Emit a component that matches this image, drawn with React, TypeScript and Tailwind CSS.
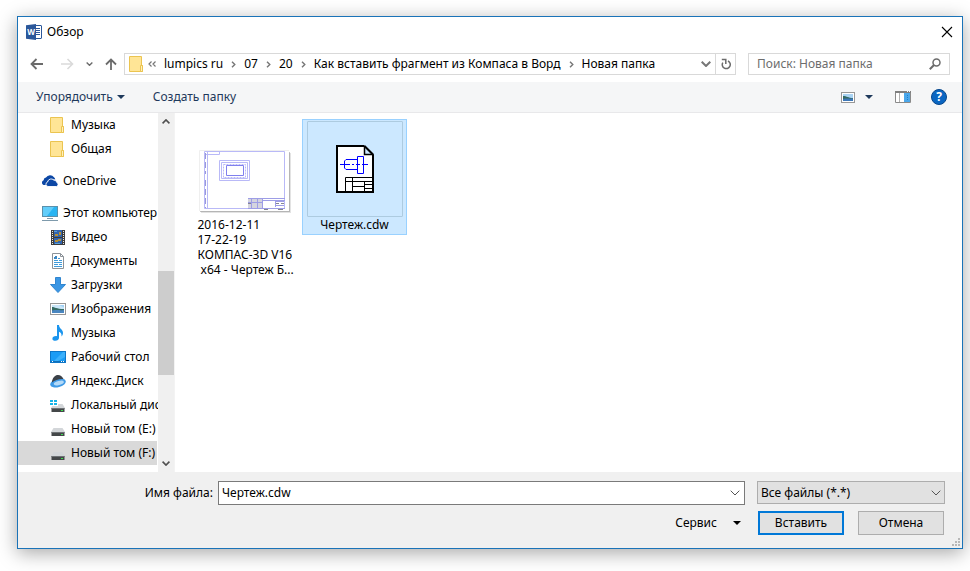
import React, { useState } from 'react';
import clsx from 'clsx';

interface TreeItem {
    id: string;
    label: string;
    icon: React.ReactNode;
    level: 1 | 2;
    spaced?: boolean;
}

const FolderIcon = () => (
    <svg className="h-4 w-[14px] shrink-0" viewBox="0 0 14 16">
        <path d="M.5.5h12v9h1v6H.5z" fill="#ffe393" stroke="#ebc450" />
        <path d="M1 1h11v14H1z" fill="#ffe596" />
        <path d="M11.500 15V9.500h2v6h-2z" fill="#fff0bd" stroke="#ebc450" />
    </svg>
);

const WordIcon = () => (
    <svg className="h-4 w-4 shrink-0" viewBox="0 0 16 16">
        <rect x="8.500" y="1.500" width="7" height="13" rx=".5" fill="#fff" stroke="#2b579a" />
        <path d="M10 4.500h4M10 6.500h4M10 8.500h4M10 10.500h4" stroke="#2b579a" />
        <path d="M0 1.200 10 0v16L0 14.800z" fill="#2b579a" />
        <text x="5" y="11" textAnchor="middle" fontSize="8" fontWeight="700" fontFamily="Noto Sans, sans-serif" fill="#fff">W</text>
    </svg>
);

const OneDriveIcon = () => (
    <svg className="h-4 w-4 shrink-0" viewBox="0 0 16 16">
        <path d="M1.500 12A2.600 2.600 0 0 1 1.600 7.200 3 3 0 0 1 4 4.600a4.800 4.800 0 0 1 8-.4 4 4 0 0 1 1.300 2.400L9 6 5 9l-.5 3z" fill="#0c47a5" />
        <path d="M6 13.500a2.300 2.300 0 0 1-.4-4.500 3.600 3.600 0 0 1 6.200-1.900 2.900 2.900 0 0 1 3 2.400 2.100 2.100 0 0 1-.4 4z" fill="#0c47a5" stroke="#fff" strokeWidth=".9" />
    </svg>
);

const ComputerIcon = () => (
    <svg className="h-4 w-4 shrink-0" viewBox="0 0 16 16">
        <rect x=".5" y="1.500" width="15" height="10" fill="#29b4f2" stroke="#5b90ab" />
        <path d="M1 2h11L5 11H1z" fill="#62cdfa" />
        <path d="M5 13.500h6M0 15.500h16" stroke="#7e9aac" />
    </svg>
);

const VideoIcon = () => (
    <svg className="h-4 w-4 shrink-0" viewBox="0 0 16 16">
        <path d="M1 1h14v15H1z" fill="#3c3c3c" />
        <path d="M2.500 2v13M13.500 2v13" stroke="#e8e8e8" strokeDasharray="1 1" />
        <path d="M4 1h8v7H4zM4 9h8v6H4z" fill="#3264ae" />
        <path d="M5 7V5h3v2zM9 3h2v3H9zM5 11h3v2H5zM8 10h3v2H8z" fill="#b69037" />
        <path d="M4 2h3v1H4zM5 14h5v1H5z" fill="#57a0dc" />
    </svg>
);

const DocumentIcon = () => (
    <svg className="h-4 w-4 shrink-0" viewBox="0 0 16 16">
        <path d="M2.500.5h8l3 3v12h-11z" fill="#fff" stroke="#8c9298" />
        <path d="M10.500.5v3h3" fill="none" stroke="#8c9298" />
        <path d="M8 5.500h2M9 7.500h3M4 9.500h8M4 11.500h4M9 11.500h3M4 13.500h8M4 7.500h4" stroke="#3f9bdb" />
        <path d="M4 4h3v2H4zM5 3h2v2H5z" fill="#3a87c4" />
    </svg>
);

const DownloadIcon = () => (
    <svg className="h-4 w-4 shrink-0" viewBox="0 0 16 16">
        <path d="M5.500.5h5v7h5L8 15.500.5 7.500h5z" fill="#3a96e4" stroke="#3185cf" />
    </svg>
);

const PictureIcon = () => (
    <svg className="h-4 w-4 shrink-0" viewBox="0 0 16 16">
        <rect x=".5" y="2.500" width="15" height="11" fill="#fff" stroke="#979797" />
        <path d="M2 4h12v8H2z" fill="#9fd0f4" />
        <path d="M2 4h7l5 2.500V8H2z" fill="#c9e5f8" />
        <path d="M2 6c3 0 4 2 12 2v2H2z" fill="#356b63" />
        <path d="M2 9.500c5-.8 8 0 12-.5v3H2z" fill="#4a86c0" />
    </svg>
);

const MusicIcon = () => (
    <svg className="h-4 w-4 shrink-0" viewBox="0 0 16 16">
        <path d="M7 0h2c0 3.500 4 4.500 4 8 0 1.500-.6 2.600-1.500 3.500.3-2.500-.5-4-2.500-4.700V13c0 1.600-1.600 2.800-3.600 2.800-1.800 0-3-.8-3-2.100 0-1.700 2-2.900 4.600-2.500z" fill="#1b95ee" />
    </svg>
);

const DesktopIcon = () => (
    <svg className="h-4 w-4 shrink-0" viewBox="0 0 16 16">
        <rect x=".5" y="2.500" width="15" height="11" fill="#1b9cf5" stroke="#0d76c8" />
        <path d="M13 3h2v5L8 12H4z" fill="#3bb0fb" />
        <path d="M1 12.500h14" stroke="#0f6fb8" />
        <path d="M2 12.500h1M11 12.500h1M13 12.500h1" stroke="#fff" />
    </svg>
);

const YandexDiskIcon = () => (
    <svg className="h-4 w-4 shrink-0" viewBox="0 0 16 16">
        <ellipse cx="8" cy="10" rx="8" ry="4.200" transform="rotate(-15 8 10)" fill="#3f9ae6" />
        <ellipse cx="8.800" cy="10" rx="5.200" ry="2" transform="rotate(-15 8.800 10)" fill="#b4daf8" />
        <path d="M2 8C3 4.500 5 2 8 2c2.500 0 4 1.500 5.500 4C9.500 5.500 5 7 2 9.500z" fill="#3c4148" />
    </svg>
);

const DriveIcon = ({ system = false }: { system?: boolean }) => (
    <svg className="h-4 w-4 shrink-0" viewBox="0 0 16 16">
        <path d="M3.500 7h9l2.500 4H1z" fill="#d3d6d9" />
        <path d="M1.500 11h13v4h-13z" fill="#444749" />
        <path d="M1.500 11.500h13" stroke="#6d7174" />
        <path d="M11 13.500h2" stroke="#3de04d" />
        {system && (
            <>
                <path d="M0 2h8v7H0z" fill="#fff" />
                <path d="M0 3h3v2H0zM4 3h3v2H4zM0 6h3v2H0zM4 6h3v2H4z" fill="#16b4e8" />
            </>
        )}
    </svg>
);

const Chevron = ({ className }: { className?: string }) => (
    <svg className={clsx('shrink-0', className)} viewBox="0 0 10 6" fill="none" stroke="currentColor">
        <path d="m.7.7 4.300 4.300L9.300.7" />
    </svg>
);

const CrumbArrow = () => (
    <svg className="h-[7px] w-[5px] shrink-0" viewBox="0 0 5 7" fill="none" stroke="#767676" strokeWidth="1.400">
        <path d="m1 .7 2.800 2.800L1 6.300" />
    </svg>
);

const Caret = () => (
    <svg className="h-1 w-2 shrink-0" viewBox="0 0 8 4" fill="currentColor">
        <path d="M0 0h8L4 4z" />
    </svg>
);

const DrawingThumbnail = () => (
    <svg className="h-[68px] w-[96px]" viewBox="0 0 96 68">
        <path d="M4 6h90v60H4z" fill="#8f8f8f" opacity=".25" />
        <path d="M3 5h90v60H3z" fill="#909090" opacity=".55" />
        <path d="M2 3h90v61H2z" fill="#fff" />
        <path d="M2.500 64V3.500H92" fill="none" stroke="#efefef" />
        <g fill="none" stroke="#b9b9f7">
            <path d="M7.500 4.500h80v57h-80zM10.500 4.500v57M7.500 7.500h15v-3" />
            <path d="M8.500 6v21M8.500 33v28" stroke="#9a9adb" strokeDasharray="6 3" />
            <path d="M22.500 13.500h30v20h-30zM24.500 15.500h26v16h-26z" />
            <path d="M26.500 17.500h22v13h-22z" strokeDasharray="2 1" />
            <path d="M29.500 18.500h17v10h-17z" stroke="#8080ee" />
        </g>
        <path d="M51 52h14v10H51z" fill="#d4d4df" />
        <path d="M51 51.500h37M51 55.500h14M54.500 52v10M60.500 52v10M65.500 52v10M78.500 54v6M66 53.500h22M78 54.500h9M78 58.500h9M51 61.500h37" stroke="#9d9de6" fill="none" />
        <path d="M67 62.500h4M81 62.500h5M79 56.500h3M84 56.500h3M51 56.500h3" stroke="#85858f" />
    </svg>
);

const CdwIcon = () => (
    <svg className="h-12 w-[38px]" viewBox="0 0 38 48">
        <path d="M1 1h27.500L37 9.500V47H1z" fill="#fff" stroke="#000" strokeWidth="2" />
        <path d="M28.500 1v8.500H37z" fill="#cce8ff" stroke="#000" strokeWidth="1.500" />
        <path d="M28 0h10v9.500z" fill="#cce8ff" />
        <path d="m28.500 1 8.500 8.500" stroke="#000" strokeWidth="2" />
        <path d="M4 19.500h10M16 19.500h2M20 19.500h4M26 19.500h6" stroke="#00f" />
        <path d="M21.500 14.500H10L8.500 16v7l1.500 1.500h11.500M21.500 11.500h6v17h-6z" fill="none" stroke="#00f" />
        <path d="M9.500 47V32.500H37M9.500 36.500H37M16.500 32v15M16.500 41.500h12M28.500 37v10M29 39.500h8M29 43.500h8" fill="none" stroke="#000" />
    </svg>
);

const tree: TreeItem[] = [
    { id: 'music-folder', label: 'Музыка', icon: <FolderIcon />, level: 2 },
    { id: 'shared', label: 'Общая', icon: <FolderIcon />, level: 2 },
    { id: 'onedrive', label: 'OneDrive', icon: <OneDriveIcon />, level: 1, spaced: true },
    { id: 'computer', label: 'Этот компьютер', icon: <ComputerIcon />, level: 1, spaced: true },
    { id: 'video', label: 'Видео', icon: <VideoIcon />, level: 2 },
    { id: 'documents', label: 'Документы', icon: <DocumentIcon />, level: 2 },
    { id: 'downloads', label: 'Загрузки', icon: <DownloadIcon />, level: 2 },
    { id: 'pictures', label: 'Изображения', icon: <PictureIcon />, level: 2 },
    { id: 'music', label: 'Музыка', icon: <MusicIcon />, level: 2 },
    { id: 'desktop', label: 'Рабочий стол', icon: <DesktopIcon />, level: 2 },
    { id: 'yandex', label: 'Яндекс.Диск', icon: <YandexDiskIcon />, level: 2 },
    { id: 'local', label: 'Локальный дис', icon: <DriveIcon system />, level: 2 },
    { id: 'drive-e', label: 'Новый том (E:)', icon: <DriveIcon />, level: 2 },
    { id: 'drive-f', label: 'Новый том (F:)', icon: <DriveIcon />, level: 2 },
];

const crumbs = ['lumpics ru', '07', '20', 'Как вставить фрагмент из Компаса в Ворд', 'Новая папка'];

function TitleBar() {
    return (
        <header className="flex h-[29px] items-center justify-between pl-2 pr-[9px]">
            <div className="flex items-center gap-[5px]">
                <WordIcon />
                <h1>Обзор</h1>
            </div>
            <button aria-label="Закрыть">
                <svg className="h-3 w-3" viewBox="0 0 12 12" stroke="#000" strokeWidth="1.100">
                    <path d="m1 1 10 10M11 1 1 11" />
                </svg>
            </button>
        </header>
    );
}

function AddressBar() {
    return (
        <nav className="flex h-9 items-center px-3">
            <div className="flex items-center text-[#6b6b6b]">
                <button aria-label="Назад">
                    <svg className="h-3 w-[14px]" viewBox="0 0 14 12" fill="none" stroke="currentColor" strokeWidth="1.800">
                        <path d="M13 6H1.500M6.500 1l-5 5 5 5" />
                    </svg>
                </button>
                <button aria-label="Вперед" className="ml-4 text-[#dadada]">
                    <svg className="h-3 w-[14px]" viewBox="0 0 14 12" fill="none" stroke="currentColor" strokeWidth="1.600">
                        <path d="M1 6h11.500M7.500 1l5 5-5 5" />
                    </svg>
                </button>
                <button aria-label="Последние расположения" className="ml-3 stroke-2">
                    <Chevron className="h-1 w-[7px]" />
                </button>
                <button aria-label="Вверх" className="ml-3">
                    <svg className="h-3 w-3" viewBox="0 0 12 12" fill="none" stroke="currentColor" strokeWidth="1.800">
                        <path d="M6 12V1.500M1 6.500l5-5 5 5" />
                    </svg>
                </button>
            </div>
            <div className="ml-[7px] flex h-[22px] min-w-0 flex-1 items-center border border-[#d9d9d9] pl-1">
                <FolderIcon />
                <button aria-label="Предыдущие папки" className="ml-[5px]">
                    <svg className="h-[6px] w-2" viewBox="0 0 8 6" fill="none" stroke="#767676" strokeWidth="1.200">
                        <path d="M3.500.5 1 3l2.500 2.500M7.500.5 5 3l2.500 2.500" />
                    </svg>
                </button>
                <ol className="ml-2 flex min-w-0 flex-1 items-center gap-2 whitespace-nowrap">
                    {crumbs.map((crumb, i) => (
                        <li key={crumb} className="flex items-center gap-2">
                            {i > 0 && <CrumbArrow />}
                            <button>{crumb}</button>
                        </li>
                    ))}
                </ol>
                <button aria-label="Предыдущие расположения" className="mr-1 stroke-2 text-[#767676]">
                    <Chevron className="h-[6px] w-[10px]" />
                </button>
                <button aria-label="Обновить" className="flex h-full w-5 items-center justify-center border-l border-[#d9d9d9]">
                    <svg className="h-3 w-[10px]" viewBox="0 0 10 12" fill="none" stroke="#6b6b6b" strokeWidth="1.500">
                        <path d="M7 3A4 4 0 1 1 1.800 4.600M.8 1.500h4V6" />
                    </svg>
                </button>
            </div>
            <label className="ml-3 flex h-[22px] w-[202px] items-center border border-[#d9d9d9] px-2">
                <input aria-label="Поиск" placeholder="Поиск: Новая папка" className="min-w-0 flex-1 outline-none placeholder:text-[#6d6d6d]" />
                <svg className="h-3 w-3 shrink-0" viewBox="0 0 12 12" fill="none" stroke="#6b6b6b" strokeWidth="1.500">
                    <circle cx="7.500" cy="4.500" r="3.500" />
                    <path d="M5 7 .8 11.200" strokeWidth="2" />
                </svg>
            </label>
        </nav>
    );
}

function Toolbar() {
    return (
        <div className="flex h-[31px] items-center justify-between border-b border-[#e8e8ea] bg-[#f5f6f7] pl-[18px] pr-[15px] text-[#1e395b]">
            <div className="flex items-center gap-7">
                <button className="flex items-center gap-1">Упорядочить <Caret /></button>
                <button>Создать папку</button>
            </div>
            <div className="flex items-center">
                <button aria-label="Изменить представление">
                    <svg className="h-[11px] w-[14px]" viewBox="0 0 14 11">
                        <rect x=".5" y=".5" width="13" height="10" fill="#fff" stroke="#979797" />
                        <path d="M2 2h10v7H2z" fill="#a9d3f3" />
                        <path d="M2 4c4 0 5 2 10 2v1H2z" fill="#356b63" />
                        <path d="M2 7c4-1 6 0 10-.5V9H2z" fill="#3c77b8" />
                    </svg>
                </button>
                <button aria-label="Дополнительные параметры" className="ml-[10px]"><Caret /></button>
                <button aria-label="Область просмотра" className="ml-[22px]">
                    <svg className="h-3 w-4" viewBox="0 0 16 12">
                        <path d="M.5.5h15v11H.5z" fill="#fff" stroke="#8a8a8a" />
                        <path d="M0 0h16v2H0z" fill="#7f7f7f" />
                        <path d="M4.500 2v9" stroke="#b0b0b0" />
                        <path d="M9 2h6v9H9z" fill="#4ba7ea" />
                        <path d="M12.500 4v5" stroke="#1c7fcf" strokeDasharray="1 1" />
                        <path d="M12 .5h1M14 .5h1" stroke="#fff" />
                    </svg>
                </button>
                <button aria-label="Справка" className="ml-5 flex h-4 w-4 items-center justify-center rounded-full border border-[#07478c] bg-[#0a66c2] text-xs font-bold text-white">?</button>
            </div>
        </div>
    );
}

function Sidebar() {
    const [selected, setSelected] = useState('drive-f');

    return (
        <aside className="flex w-[156px] shrink-0">
            <ul className="min-w-0 flex-1">
                {tree.map((item) => (
                    <li key={item.id} className={clsx(item.spaced && 'mt-2')}>
                        <button
                            onClick={() => setSelected(item.id)}
                            className={clsx(
                                'flex h-6 w-[139px] items-center whitespace-nowrap',
                                item.level === 1 ? 'gap-[5px] pl-6' : 'pl-8',
                                selected === item.id && 'bg-[#d9d9d9]'
                            )}
                        >
                            {item.level === 2 ? <span className="flex w-[21px] shrink-0">{item.icon}</span> : item.icon}
                            <span>{item.label}</span>
                        </button>
                    </li>
                ))}
            </ul>
            <div className="flex w-4 flex-col items-center bg-[#f0f0f0] text-[#505050]">
                <button aria-label="Вверх" className="flex h-[17px] items-center">
                    <Chevron className="h-[5px] w-2 rotate-180 stroke-2" />
                </button>
                <div className="flex-[141]" />
                <div className="w-full flex-[104] bg-[#cdcdcd]" />
                <div className="flex-[80]" />
                <button aria-label="Вниз" className="flex h-[17px] items-center">
                    <Chevron className="h-[5px] w-2 stroke-2" />
                </button>
            </div>
        </aside>
    );
}

function FileList() {
    return (
        <main className="flex min-w-0 flex-1 items-start gap-[5px] border-l border-[#f3f3f3] pl-[17px] pt-[6px]">
            <button className="flex w-[105px] flex-col items-center">
                <span className="flex h-[98px] items-end pb-[2px]"><DrawingThumbnail /></span>
                <span className="w-[94px] whitespace-pre text-left leading-[15px]">
                    {'2016-12-11\n17-22-19\nКОМПАС-3D V16\n x64 - Чертеж Б...'}
                </span>
            </button>
            <button className="flex h-[116px] w-[105px] flex-col items-center border border-[#99d1ff] bg-[#cce8ff] pt-px">
                <span className="flex h-[96px] w-[96px] items-center justify-center rounded-[1px] border border-[#adcbe0]">
                    <CdwIcon />
                </span>
                <span className="leading-[15px]">Чертеж.cdw</span>
            </button>
        </main>
    );
}

function Footer() {
    const [fileName, setFileName] = useState('Чертеж.cdw');

    return (
        <footer className="flex h-[76px] flex-col gap-[6px] bg-[#f0f0f0] pr-[17px] pt-[9px]">
            <div className="flex">
                <label htmlFor="file-name" className="w-[200px] shrink-0 pr-[5px] text-right leading-6">Имя файла:</label>
                <div className="flex h-6 min-w-0 flex-1 items-center border border-[#7a7a7a] bg-white pr-1">
                    <input
                        id="file-name"
                        value={fileName}
                        onChange={(e) => setFileName(e.target.value)}
                        className="min-w-0 flex-1 pl-[3px] outline-none"
                    />
                    <button aria-label="Недавние файлы" className="text-[#555]"><Chevron className="h-[6px] w-[10px]" /></button>
                </div>
                <div className="relative ml-3 h-[23px] w-[188px]">
                    <select aria-label="Тип файла" className="h-full w-full appearance-none border border-[#adadad] bg-[#e1e1e1] pl-[3px] pr-5">
                        <option>Все файлы (*.*)</option>
                    </select>
                    <Chevron className="pointer-events-none absolute right-1 top-[9px] h-[6px] w-[10px] text-[#555]" />
                </div>
            </div>
            <div className="flex items-center justify-end pr-px">
                <button className="flex items-center gap-4">
                    Сервис <Caret />
                </button>
                <button className="ml-[17px] h-6 w-[86px] border-2 border-[#0078d7] bg-[#e1e1e1]">Вставить</button>
                <button className="ml-[14px] h-6 w-[86px] border border-[#adadad] bg-[#e1e1e1]">Отмена</button>
            </div>
        </footer>
    );
}

export default function App() {
    return (
        <div className="flex min-h-screen bg-white pb-[22px] pl-[17px] pr-[7px] pt-4 font-['Noto_Sans',sans-serif] text-xs text-black">
            <section className="relative flex min-w-0 flex-1 flex-col border border-[#1a73b8] bg-white shadow-[0_4px_18px_rgba(0,0,0,0.35)]">
                <TitleBar />
                <AddressBar />
                <Toolbar />
                <div className="flex flex-1">
                    <Sidebar />
                    <FileList />
                </div>
                <Footer />
                <svg className="absolute bottom-[2px] right-[2px] h-2 w-2" viewBox="0 0 8 8" fill="#b8b8b8">
                    <path d="M6 0h2v2H6zM3 3h2v2H3zM6 3h2v2H6zM0 6h2v2H0zM3 6h2v2H3zM6 6h2v2H6z" />
                </svg>
            </section>
        </div>
    );
}
